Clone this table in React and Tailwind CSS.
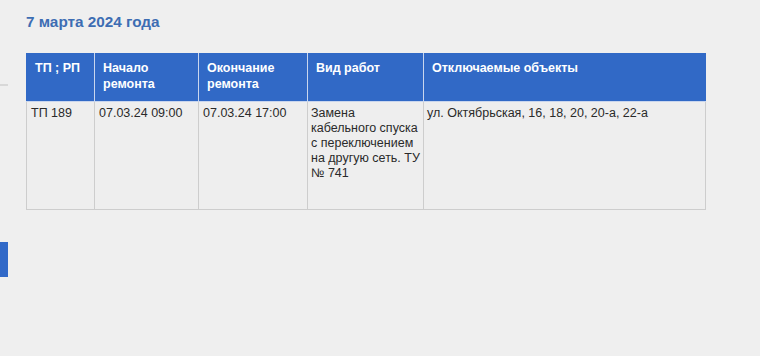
const rows = [
  {
    tp: 'ТП 189',
    start: '07.03.24 09:00',
    end: '07.03.24 17:00',
    work: 'Замена кабельного спуска с переключением на другую сеть. ТУ № 741',
    objects: 'ул. Октябрьская, 16, 18, 20, 20-а, 22-а',
  },
]

const columns = [
  { title: ['ТП ; РП'], w: 'w-[68px]' },
  { title: ['Начало', 'ремонта'], w: 'w-[104px]' },
  { title: ['Окончание', 'ремонта'], w: 'w-[109px]' },
  { title: ['Вид работ'], w: 'w-[116px]' },
  { title: ['Отключаемые объекты'], w: '' },
]

export default function App() {
  return (
    <div className="relative w-[760px] h-[356px] bg-[#efefef] font-['Liberation_Sans',Arial,sans-serif] overflow-hidden">
      {/* side rail bits */}
      <div className="absolute left-0 top-[84px] w-[8px] h-[2px] bg-[#d8d8d8]" />
      <div className="absolute left-0 top-[242px] w-[8px] h-[35px] bg-[#3169c8]" />

      <div className="pl-[26px] pt-[12px]">
        <h2 className="text-[15.3px] leading-[20px] font-bold text-[#3d6db3]">7 марта 2024 года</h2>

        <table className="mt-[21px] w-[680px] border-collapse text-left">
          <thead>
            <tr className="bg-[#3169c6] text-white">
              {columns.map((c, i) => (
                <th
                  key={i}
                  className={`${c.w} h-[48px] align-top pl-[8px] pr-[4px] pt-[6px] text-[12.5px] leading-[16px] font-bold border border-[#c9d6ee] first:border-l-[#3169c6] last:border-r-[#3169c6] border-t-[#3169c6]`}
                >
                  {c.title.map((t, j) => (
                    <div key={j}>{t}</div>
                  ))}
                </th>
              ))}
            </tr>
          </thead>
          <tbody>
            {rows.map((r, i) => (
              <tr key={i} className="bg-[#eeeeee] text-[#2a2a2a] text-[12.5px] leading-[15px]">
                <td className="h-[108px] align-top px-[4px] pt-[4px] border border-[#cdcdcd]">{r.tp}</td>
                <td className="align-top px-[4px] pt-[4px] border border-[#cdcdcd]">{r.start}</td>
                <td className="align-top px-[4px] pt-[4px] border border-[#cdcdcd]">{r.end}</td>
                <td className="align-top px-[3px] pt-[4px] border border-[#cdcdcd]">{r.work}</td>
                <td className="align-top px-[3px] pt-[4px] border border-[#cdcdcd]">{r.objects}</td>
              </tr>
            ))}
          </tbody>
        </table>
      </div>
    </div>
  )
}
